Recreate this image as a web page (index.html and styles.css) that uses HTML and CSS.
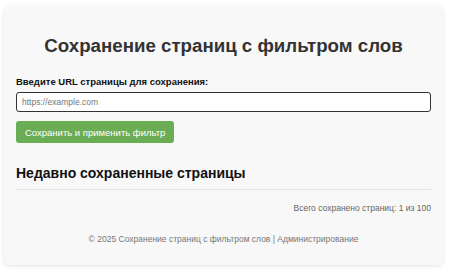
FILE: index.html
```html
<!DOCTYPE html>
<html lang="ru">
<head>
    <meta charset="UTF-8">
    <meta name="viewport" content="width=device-width, initial-scale=1.0">
    <title>Сохранение страниц с фильтром слов</title>
    <link rel="stylesheet" href="styles.css">
</head>
<body>

    <div class="container">
        <h1>Сохранение страниц с фильтром слов</h1>

        <!-- Форма сохранения -->
        <form class="save-form" onsubmit="return false">
            <label for="url">Введите URL страницы для сохранения:</label>
            <input type="text" id="url" placeholder="https://example.com">
            <button type="submit">Сохранить и применить фильтр</button>
        </form>

        <!-- Последние страницы -->
        <h2>Недавно сохраненные страницы</h2>
        <div class="pages-list"></div>
        <p class="stats">Всего сохранено страниц: 1 из 100</p>

        <footer>
            © 2025 Сохранение страниц с фильтром слов | <a href="#">Администрирование</a>
        </footer>
    </div>

</body>
</html>
```

FILE: styles.css
```css
body {
    font-family: "Liberation Sans", Arial, sans-serif;
    margin: 0;
    padding: 6px 7px 6px 4px;
    background: #ffffff;
    color: #333;
}
.container {
    background: #f8f8f8;
    border-radius: 6px;
    box-shadow: 0 1px 4px rgba(0, 0, 0, 0.12);
    padding: 29px 12px 21px;
}
h1 {
    font-size: 18.7px;
    text-align: center;
    color: #333;
    margin: 0 0 19px;
}
.save-form {
    display: flex;
    flex-direction: column;
    align-items: flex-start;
}
label {
    font-size: 9.5px;
    font-weight: bold;
    color: #111;
    margin-bottom: 5px;
}
input {
    width: 100%;
    box-sizing: border-box;
    height: 20px;
    padding: 2px 5px;
    font-family: inherit;
    font-size: 8.5px;
    border: 1.5px solid #333;
    border-radius: 3px;
    background: #fff;
    margin-bottom: 9px;
}
input::placeholder {
    color: #777;
}
button {
    background-color: #6aad55;
    color: white;
    border: none;
    border-radius: 3px;
    font-family: inherit;
    font-size: 9.5px;
    padding: 0 9px;
    height: 22px;
    cursor: pointer;
}
h2 {
    font-size: 14px;
    color: #111;
    margin: 22px 0 0;
}
.pages-list {
    border-top: 1px solid #e3e3e3;
    margin-top: 8px;
}
.stats {
    text-align: right;
    font-size: 8.5px;
    color: #666;
    margin: 13px 0 0;
}
footer {
    text-align: center;
    font-size: 8.5px;
    color: #777;
    margin-top: 21px;
}
footer a {
    color: #777;
    text-decoration: none;
}
```
